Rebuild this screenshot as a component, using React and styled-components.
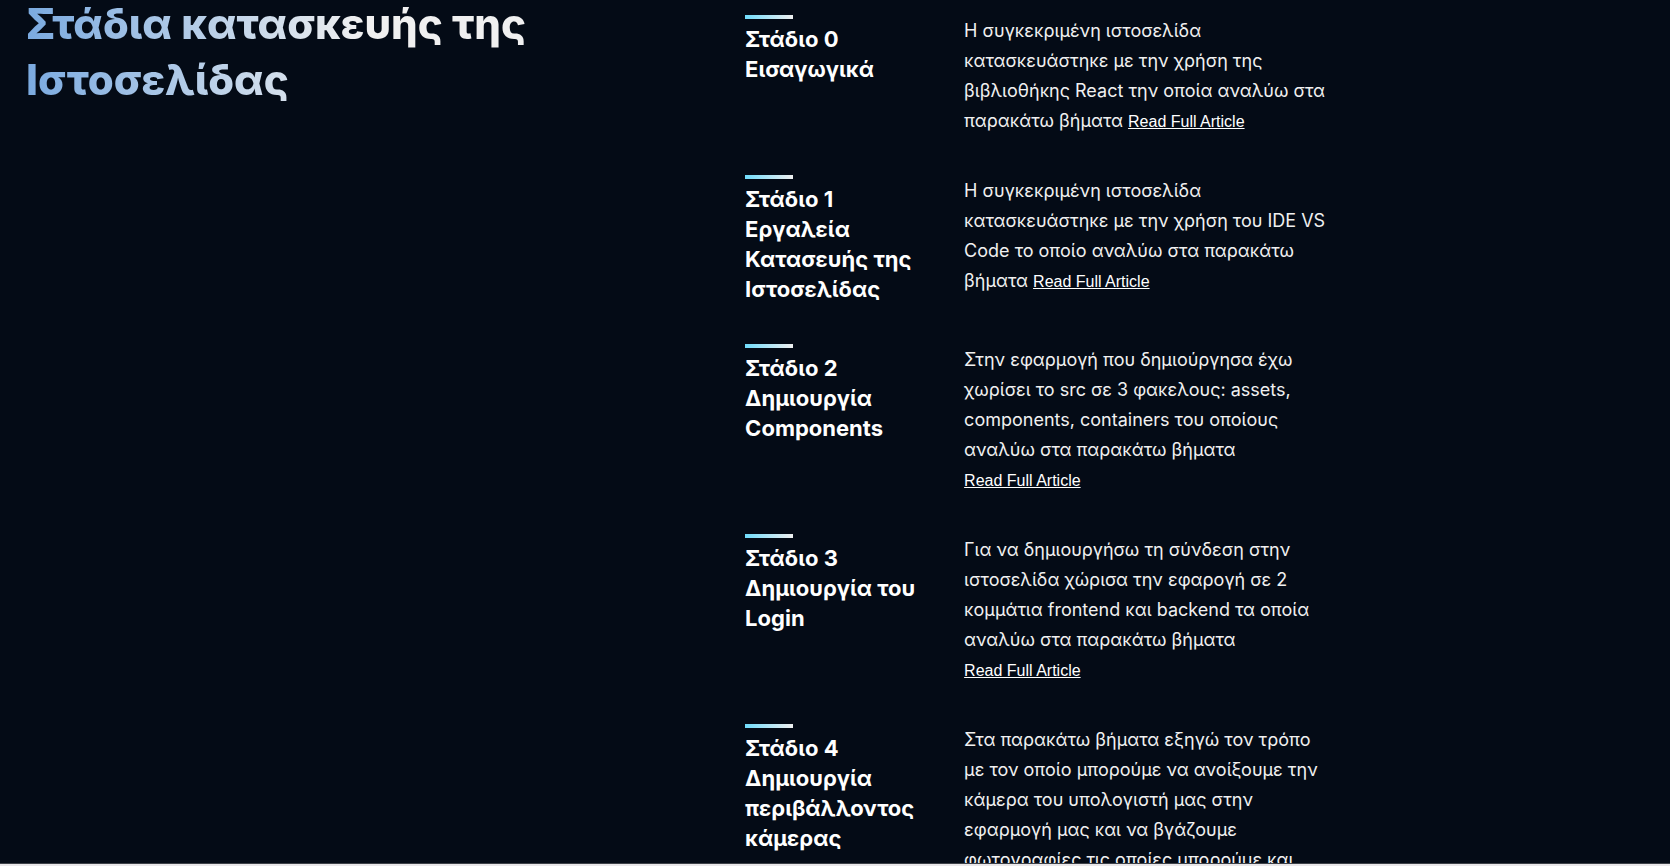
import React from 'react';
import styled, { createGlobalStyle } from 'styled-components';

const GlobalStyle = createGlobalStyle`
  * {
    box-sizing: border-box;
  }

  body {
    margin: 0;
    background: #e9e7e9;
    font-family: Inter, 'Noto Sans', sans-serif;
  }
`;

const Page = styled.div`
  height: 100vh;
  display: flex;
  flex-direction: column;
  overflow: hidden;
`;

const Section = styled.main`
  flex: 1;
  min-height: 0;
  overflow: hidden;
  display: grid;
  grid-template-columns: 4fr 5fr;
  align-items: start;
  padding: 0 26px;
  background: #040b16;
  border-bottom: 1px solid #3d4148;
`;

const Footer = styled.footer`
  flex: none;
  height: 2px;
  background: #e9e7e9;
`;

const Title = styled.h1`
  margin: 0;
  margin-top: -4px;
  max-width: 510px;
  font-size: 42px;
  font-weight: 800;
  line-height: 56px;
  color: transparent;
  background: linear-gradient(90deg, #7aaae0 0%, #f0f0f0 66%);
  background-clip: text;
  -webkit-background-clip: text;
`;

const Stages = styled.div`
  display: flex;
  flex-direction: column;
  gap: 40px;
  padding-top: 15px;
`;

const Stage = styled.article`
  display: grid;
  grid-template-columns: 187px minmax(0, 1fr);
  column-gap: 32px;
  align-items: start;
`;

const StageTitle = styled.h2`
  margin: 0;
  font-size: 22px;
  font-weight: 700;
  line-height: 30px;
  white-space: pre-line;
  color: #fff;

  &::before {
    content: '';
    display: block;
    width: 48px;
    height: 4px;
    margin-bottom: 5px;
    background: linear-gradient(90deg, #6fdcfb 0%, #f0f0f0 100%);
  }
`;

const StageText = styled.p`
  margin: 1px 0 -1px;
  font-size: 18px;
  font-weight: 400;
  line-height: 30px;
  white-space: pre-line;
  color: #f0f0f0;
`;

const ArticleLink = styled.a`
  font-family: 'Liberation Sans', Arial, sans-serif;
  font-size: 16px;
  line-height: 20px;
  color: #fff;
  text-decoration: underline;
`;

const stages = [
  {
    title: 'Στάδιο 0\nΕισαγωγικά',
    text: 'Η συγκεκριμένη ιστοσελίδα\nκατασκευάστηκε με την χρήση της\nβιβλιοθήκης React την οποία αναλύω στα\nπαρακάτω βήματα ',
  },
  {
    title: 'Στάδιο 1\nΕργαλεία\nΚατασευής της\nΙστοσελίδας',
    text: 'Η συγκεκριμένη ιστοσελίδα\nκατασκευάστηκε με την χρήση του IDE VS\nCode το οποίο αναλύω στα παρακάτω\nβήματα ',
  },
  {
    title: 'Στάδιο 2\nΔημιουργία\nComponents',
    text: 'Στην εφαρμογή που δημιούργησα έχω\nχωρίσει το src σε 3 φακελους: assets,\ncomponents, containers του οποίους\nαναλύω στα παρακάτω βήματα\n',
  },
  {
    title: 'Στάδιο 3\nΔημιουργία του\nLogin',
    text: 'Για να δημιουργήσω τη σύνδεση στην\nιστοσελίδα χώρισα την εφαρογή σε 2\nκομμάτια frontend και backend τα οποία\nαναλύω στα παρακάτω βήματα\n',
  },
  {
    title: 'Στάδιο 4\nΔημιουργία\nπεριβάλλοντος\nκάμερας',
    text: 'Στα παρακάτω βήματα εξηγώ τον τρόπο\nμε τον οποίο μπορούμε να ανοίξουμε την\nκάμερα του υπολογιστή μας στην\nεφαρμογή μας και να βγάζουμε\nφωτογραφίες τις οποίες μπορούμε και\n',
  },
];

export default function App() {
  return (
    <Page>
      <GlobalStyle />
      <Section>
        <Title>Στάδια κατασκευής της Ιστοσελίδας</Title>
        <Stages>
          {stages.map(({ title, text }) => (
            <Stage key={title}>
              <StageTitle>{title}</StageTitle>
              <StageText>
                {text}
                <ArticleLink href="#article">Read Full Article</ArticleLink>
              </StageText>
            </Stage>
          ))}
        </Stages>
      </Section>
      <Footer />
    </Page>
  );
}
